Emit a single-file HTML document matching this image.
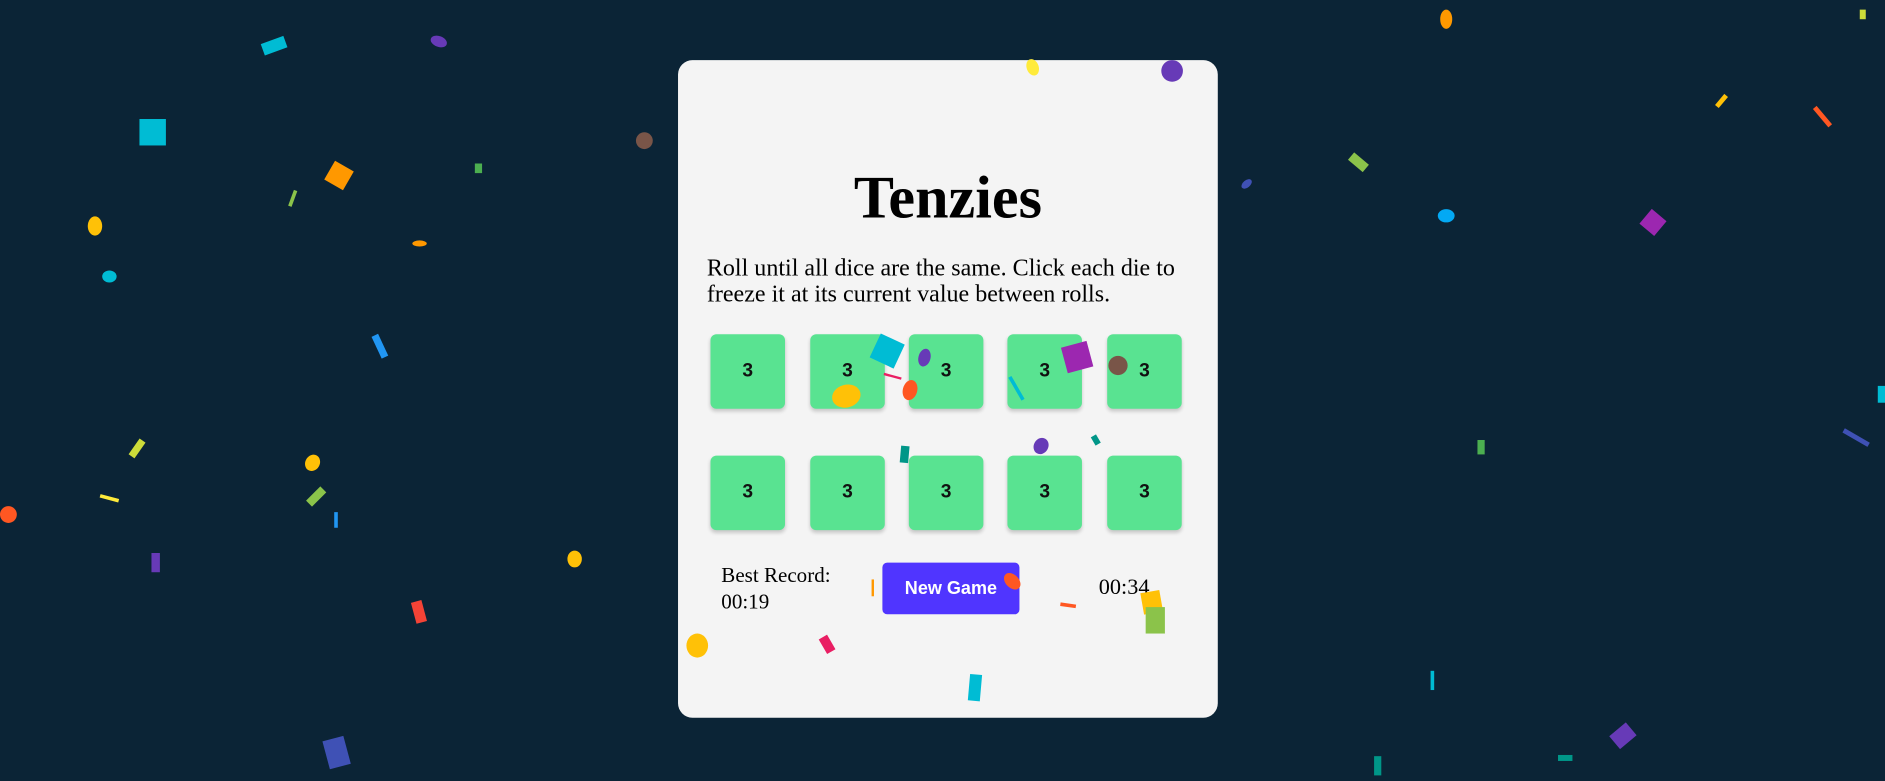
<!DOCTYPE html>
<html><head><meta charset="utf-8"><style>
html,body{margin:0;padding:0;width:1885px;height:781px;overflow:hidden;background:#0b2436;}
#w{position:absolute;left:0;top:0;width:1568px;height:650px;transform:scale(1.20217);transform-origin:0 0;}
.card{position:absolute;left:564px;top:50px;width:449px;height:547px;background:#f4f4f4;border-radius:12px;}
h1{position:absolute;left:564px;width:449px;top:136px;margin:0;text-align:center;font:bold 50px/56px "Liberation Serif",serif;color:#000;}
p{position:absolute;left:588px;top:212px;width:412px;margin:0;font:20px/22px "Liberation Serif",serif;color:#000;}
.d{position:absolute;width:62px;height:62px;background:#59e391;border-radius:5px;box-shadow:0 2px 3px rgba(0,0,0,.18);font:bold 16px/62px "Liberation Sans",sans-serif;text-align:center;color:#111;}
.br{position:absolute;left:600px;top:467px;font:17.5px/22px "Liberation Serif",serif;}
.btn{position:absolute;left:734px;top:468px;width:114px;height:43px;background:#5035ff;border-radius:4px;color:#fff;font:bold 15px/43px "Liberation Sans",sans-serif;text-align:center;}
.t{position:absolute;left:914px;top:477px;font:18.5px/24px "Liberation Serif",serif;}
.c{position:absolute;}
</style></head><body><div id="w">
<div class="card"></div>
<h1>Tenzies</h1>
<p>Roll until all dice are the same. Click each die to freeze it at its current value between rolls.</p>
<div class="d" style="left:591px;top:278px">3</div>
<div class="d" style="left:674px;top:278px">3</div>
<div class="d" style="left:756px;top:278px">3</div>
<div class="d" style="left:838px;top:278px">3</div>
<div class="d" style="left:921px;top:278px">3</div>
<div class="d" style="left:591px;top:379px">3</div>
<div class="d" style="left:674px;top:379px">3</div>
<div class="d" style="left:756px;top:379px">3</div>
<div class="d" style="left:838px;top:379px">3</div>
<div class="d" style="left:921px;top:379px">3</div>
<div class="br">Best Record:<br>00:19</div>
<div class="btn">New Game</div>
<div class="t">00:34</div>

<div class="c" style="left:218px;top:33px;width:20px;height:10px;background:#00bcd4;transform:rotate(-20deg)"></div>
<div class="c" style="left:358px;top:30px;width:14px;height:9px;background:#673ab7;border-radius:50%;transform:rotate(20deg)"></div>
<div class="c" style="left:116px;top:99px;width:22px;height:22px;background:#00bcd4"></div>
<div class="c" style="left:273px;top:137px;width:18px;height:18px;background:#ff9800;transform:rotate(30deg)"></div>
<div class="c" style="left:73px;top:180px;width:12px;height:16px;background:#ffc107;border-radius:50%"></div>
<div class="c" style="left:85px;top:225px;width:12px;height:10px;background:#00bcd4;border-radius:50%"></div>
<div class="c" style="left:529px;top:110px;width:14px;height:14px;background:#795548;border-radius:50%"></div>
<div class="c" style="left:343px;top:200px;width:12px;height:5px;background:#ff9800;border-radius:50%"></div>
<div class="c" style="left:313px;top:278px;width:6px;height:20px;background:#2196f3;transform:rotate(-25deg)"></div>
<div class="c" style="left:254px;top:378px;width:12px;height:14px;background:#ffc107;border-radius:50%;transform:rotate(30deg)"></div>
<div class="c" style="left:258px;top:406px;width:10px;height:14px;background:#8bc34a;transform:rotate(45deg) scale(.7,1.2)"></div>
<div class="c" style="left:111px;top:365px;width:6px;height:16px;background:#cddc39;transform:rotate(35deg)"></div>
<div class="c" style="left:0px;top:421px;width:14px;height:14px;background:#ff5722;border-radius:50%"></div>
<div class="c" style="left:126px;top:460px;width:7px;height:16px;background:#673ab7"></div>
<div class="c" style="left:344px;top:500px;width:9px;height:18px;background:#f44336;transform:rotate(-15deg)"></div>
<div class="c" style="left:472px;top:458px;width:12px;height:14px;background:#ffc107;border-radius:50%"></div>
<div class="c" style="left:571px;top:527px;width:18px;height:20px;background:#ffc107;border-radius:50%"></div>
<div class="c" style="left:271px;top:614px;width:18px;height:24px;background:#3f51b5;transform:rotate(-15deg)"></div>
<div class="c" style="left:684px;top:529px;width:8px;height:14px;background:#e91e63;transform:rotate(-30deg)"></div>
<div class="c" style="left:806px;top:561px;width:10px;height:22px;background:#00bcd4;transform:rotate(5deg)"></div>
<div class="c" style="left:1198px;top:8px;width:10px;height:16px;background:#ff9800;border-radius:50%"></div>
<div class="c" style="left:966px;top:50px;width:18px;height:18px;background:#673ab7;border-radius:50%"></div>
<div class="c" style="left:854px;top:49px;width:10px;height:14px;background:#ffeb3b;border-radius:50%;transform:rotate(-20deg)"></div>
<div class="c" style="left:1367px;top:177px;width:16px;height:16px;background:#9c27b0;transform:rotate(40deg)"></div>
<div class="c" style="left:1196px;top:174px;width:14px;height:11px;background:#03a9f4;border-radius:50%"></div>
<div class="c" style="left:1122px;top:131px;width:16px;height:8px;background:#8bc34a;transform:rotate(40deg)"></div>
<div class="c" style="left:1514px;top:87px;width:4px;height:20px;background:#ff5722;transform:rotate(-40deg)"></div>
<div class="c" style="left:1430px;top:78px;width:4px;height:12px;background:#ffc107;transform:rotate(40deg)"></div>
<div class="c" style="left:1229px;top:366px;width:6px;height:12px;background:#4caf50"></div>
<div class="c" style="left:1343px;top:603px;width:14px;height:18px;background:#673ab7;transform:rotate(50deg)"></div>
<div class="c" style="left:1143px;top:629px;width:6px;height:16px;background:#009688"></div>
<div class="c" style="left:1296px;top:628px;width:12px;height:5px;background:#009688"></div>
<div class="c" style="left:1562px;top:321px;width:6px;height:14px;background:#00bcd4"></div>
<div class="c" style="left:1542px;top:352px;width:4px;height:24px;background:#3f51b5;transform:rotate(-60deg)"></div>
<div class="c" style="left:1032px;top:150px;width:10px;height:6px;background:#3f51b5;border-radius:50%;transform:rotate(-40deg)"></div>
<div class="c" style="left:395px;top:136px;width:6px;height:8px;background:#4caf50"></div>
<div class="c" style="left:242px;top:158px;width:3px;height:14px;background:#8bc34a;transform:rotate(20deg)"></div>
<div class="c" style="left:83px;top:413px;width:16px;height:3px;background:#ffeb3b;transform:rotate(15deg)"></div>
<div class="c" style="left:278px;top:426px;width:3px;height:13px;background:#2196f3"></div>
<div class="c" style="left:950px;top:492px;width:16px;height:18px;background:#ffc107;transform:rotate(-10deg)"></div>
<div class="c" style="left:953px;top:505px;width:16px;height:22px;background:#8bc34a"></div>
<div class="c" style="left:727px;top:281px;width:22px;height:22px;background:#00bcd4;transform:rotate(25deg)"></div>
<div class="c" style="left:764px;top:290px;width:10px;height:15px;background:#673ab7;border-radius:50%;transform:rotate(15deg)"></div>
<div class="c" style="left:751px;top:316px;width:12px;height:17px;background:#ff5722;border-radius:50%;transform:rotate(15deg)"></div>
<div class="c" style="left:692px;top:320px;width:24px;height:19px;background:#ffc107;border-radius:50%;transform:rotate(-15deg)"></div>
<div class="c" style="left:885px;top:286px;width:22px;height:22px;background:#9c27b0;transform:rotate(-15deg)"></div>
<div class="c" style="left:922px;top:296px;width:16px;height:16px;background:#795548;border-radius:50%"></div>
<div class="c" style="left:844px;top:312px;width:3px;height:22px;background:#00bcd4;transform:rotate(-30deg)"></div>
<div class="c" style="left:735px;top:312px;width:15px;height:2px;background:#e91e63;transform:rotate(15deg)"></div>
<div class="c" style="left:860px;top:364px;width:12px;height:14px;background:#673ab7;border-radius:50%;transform:rotate(30deg)"></div>
<div class="c" style="left:749px;top:371px;width:7px;height:14px;background:#009688;transform:rotate(5deg)"></div>
<div class="c" style="left:909px;top:362px;width:5px;height:8px;background:#009688;transform:rotate(-30deg)"></div>
<div class="c" style="left:834px;top:478px;width:16px;height:11px;background:#ff5722;border-radius:50%;transform:rotate(45deg)"></div>
<div class="c" style="left:882px;top:502px;width:13px;height:3px;background:#ff5722;transform:rotate(8deg)"></div>
<div class="c" style="left:725px;top:482px;width:2px;height:14px;background:#ff9800"></div>
<div class="c" style="left:1190px;top:558px;width:3px;height:16px;background:#00bcd4"></div>
<div class="c" style="left:1547px;top:8px;width:5px;height:8px;background:#cddc39"></div>
</div></body></html>
